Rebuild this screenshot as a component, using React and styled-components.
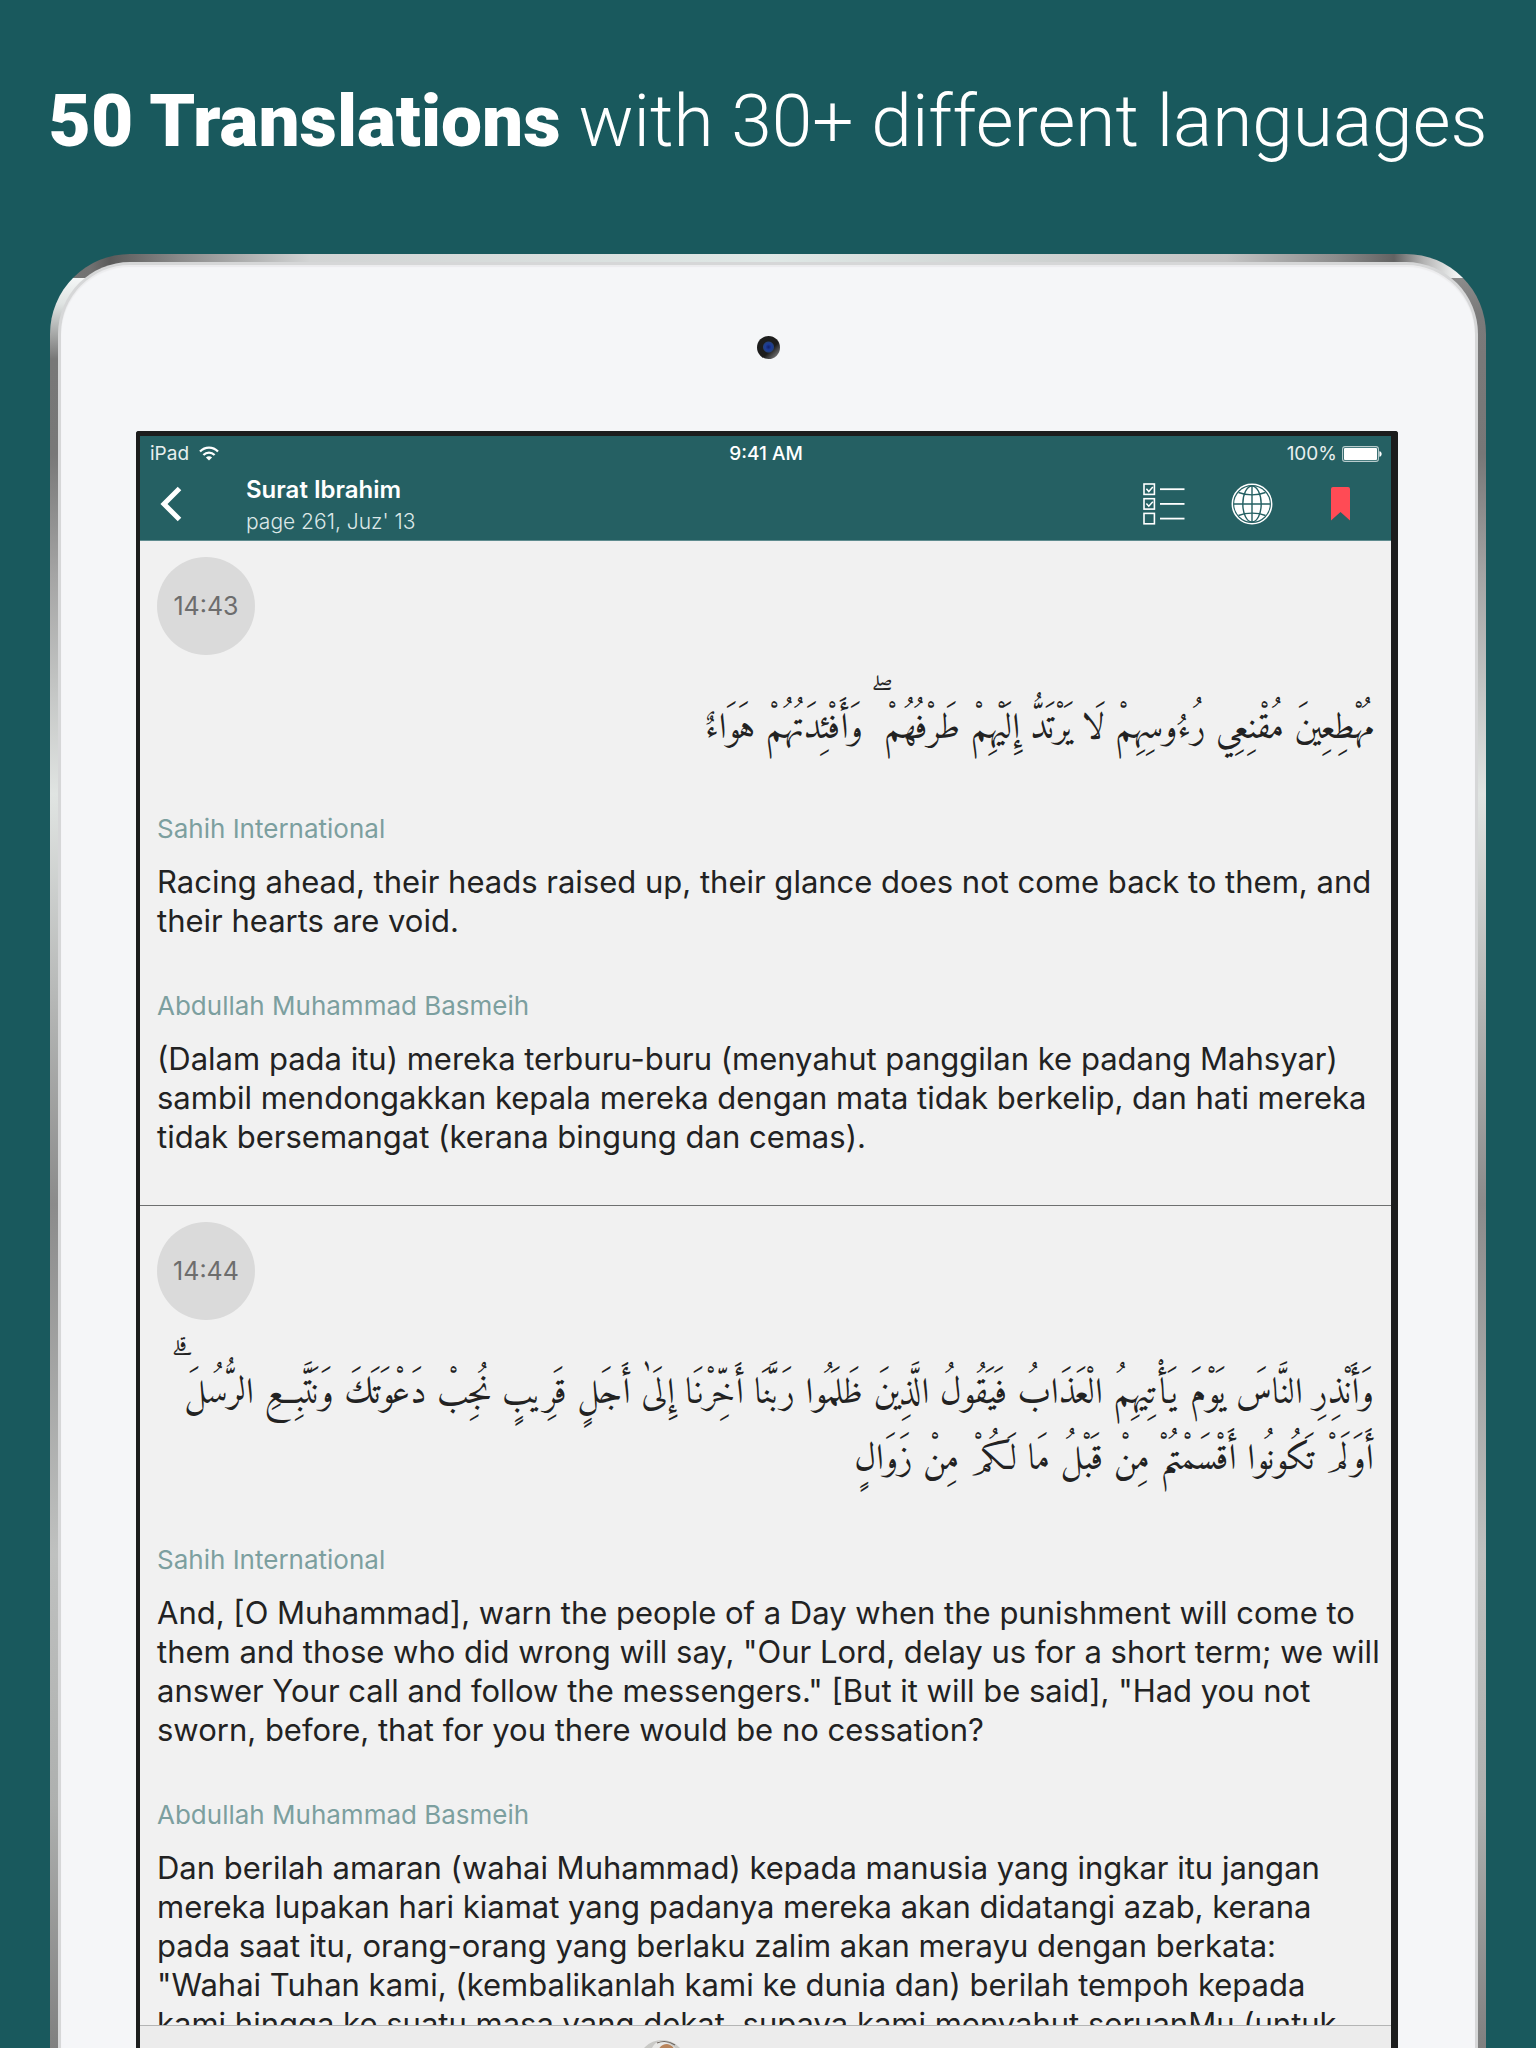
import React from "react";
import styled, { createGlobalStyle } from "styled-components";

const GlobalStyle = createGlobalStyle`
  * { box-sizing: border-box; }
  body {
    margin: 0;
    background: #19595d;
    font-family: Inter, "Open Sans", sans-serif;
  }
`;

const Page = styled.div`
  display: flex;
  flex-direction: column;
  height: 100vh;
  overflow: hidden;
`;

const Headline = styled.h1`
  margin: 0;
  padding: 77px 0 89px;
  color: #fff;
  font-family: Roboto, sans-serif;
  font-size: 73px;
  line-height: 88px;
  font-weight: 300;
  text-align: center;
  white-space: nowrap;

  strong {
    font-weight: 900;
  }
`;

const Device = styled.div`
  flex: 1;
  min-height: 0;
  display: flex;
  margin: 0 50px;
  padding: 8px 8px 0;
  border-radius: 80px 80px 0 0;
  background:
    linear-gradient(90deg, #777 0, #727272 40px, #5a5a5a 60px, #8a8a8a 130px, #d2d4d4 260px, #dfe8e6 50%, #c4c4c4 calc(100% - 260px), #8c8c8c calc(100% - 150px), #626262 calc(100% - 92px), #b4b4b4 calc(100% - 62px), #f2f4f4 calc(100% - 29px)) 0 0 / 100% 24px no-repeat,
    linear-gradient(180deg, #f4f6f6 24px, #dfe3e2 50px, #777 105px, #787878 200px, #a4a4a4 320px, #e0e4e2 540px, #8b8b8b 950px, #bfc1c0 1300px, #aeb0af 1550px, #808080 100%) 0 0 / 50% 100% no-repeat,
    linear-gradient(180deg, #8c8c8c 24px, #7a7a7a 60px, #777 200px, #a4a4a4 320px, #e0e4e2 540px, #8b8b8b 950px, #bfc1c0 1300px, #aeb0af 1550px, #808080 100%) 100% 0 / 50% 100% no-repeat;
`;

const Face = styled.div`
  flex: 1;
  min-width: 0;
  display: flex;
  flex-direction: column;
  border: 3px solid #d6d7d8;
  border-bottom: 0;
  border-radius: 72px 72px 0 0;
  background: #f5f6f8;
  box-shadow: inset 0 2px 1px #ececee;
`;

const CameraRow = styled.div`
  flex: none;
  display: flex;
  justify-content: center;
  padding: 71px 0 72px;
`;

const Camera = styled.div`
  width: 23px;
  height: 23px;
  border-radius: 50%;
  background:
    radial-gradient(circle at 50% 48%, #11206a 0, #1c3c9a 3px, #23407c 5px, transparent 6px),
    linear-gradient(135deg, #1d1d1d 60%, #6a6a6c 85%);
`;

const Screen = styled.main`
  flex: 1;
  min-height: 0;
  display: flex;
  flex-direction: column;
  margin: 0 77px 0 75px;
  border: 5px solid #1c1d1d;
  border-right-width: 7px;
  border-left-width: 4px;
  border-bottom: 0;
  border-radius: 3px 3px 0 0;
  background: #f1f1f1;
`;

const Header = styled.header`
  flex: none;
  border-bottom: 1px solid #5f8c8f;
  background: #256063;
  color: #fff;
`;

const StatusBar = styled.div`
  display: grid;
  grid-template-columns: 1fr auto 1fr;
  align-items: center;
  height: 35px;
  padding: 0 9px 0 10px;
  font-size: 19px;
  line-height: 24px;
`;

const StatusGroup = styled.div`
  display: flex;
  align-items: center;
  gap: ${(p) => (p.$end ? "5px" : "10px")};
  justify-content: ${(p) => (p.$end ? "flex-end" : "flex-start")};
  color: #e8efef;
`;

const Clock = styled.time`
  font-weight: 500;
`;

const NavBar = styled.div`
  display: flex;
  align-items: center;
  height: 69px;
  padding: 0 27px 4px 11px;
`;

const IconButton = styled.button`
  display: grid;
  place-items: center;
  padding: 0;
  border: 0;
  background: none;
  color: inherit;
  width: ${(p) => p.$width || 48}px;
  height: 48px;
  cursor: pointer;

  svg {
    display: block;
  }
`;

const Titles = styled.div`
  flex: 1;
  padding: 5px 0 0 55px;
`;

const Title = styled.h2`
  margin: 0;
  font-size: 24px;
  line-height: 32px;
  font-weight: 600;
`;

const Subtitle = styled.p`
  margin: 0;
  font-size: 21px;
  line-height: 32px;
  font-weight: 300;
  color: #dce8e8;
`;

const Actions = styled.div`
  display: flex;
  align-items: center;
  gap: 40px;
`;

const Verses = styled.div`
  flex: 1;
  min-height: 0;
  overflow: hidden;
`;

const Verse = styled.article`
  padding: 16px 17px 49px;
  border-bottom: 1px solid #6e7070;
  color: #222;
`;

const Badge = styled.div`
  display: grid;
  place-items: center;
  width: 98px;
  height: 98px;
  border-radius: 50%;
  background: #dadada;
  color: #6d6d6d;
  font-size: 25px;
  line-height: 32px;
`;

const Arabic = styled.p`
  margin: 42px 0 0;
  font-family: Amiri, "Noto Naskh Arabic", "DejaVu Sans", sans-serif;
  font-feature-settings: "calt" 0, "liga" 0, "dlig" 0;
  font-size: 36px;
  line-height: 66px;
`;

const Line = styled.span`
  display: block;
  white-space: nowrap;
`;

const Translation = styled.section`
  margin-top: 50px;
`;

const Translator = styled.h3`
  margin: 0 0 17px;
  color: #7c9f9f;
  font-size: 26px;
  line-height: 32px;
  font-weight: 400;
`;

const Body = styled.p`
  margin: 0;
  font-size: 31px;
  line-height: 39px;
`;

const Footer = styled.footer`
  flex: none;
  height: 23px;
  overflow: hidden;
  display: flex;
  justify-content: center;
  padding: 14px 208px 0 0;
  border-top: 1px solid #b4b5b5;
  background: #ececec;
`;

const WifiIcon = () => (
  <svg width="20" height="15" viewBox="0 0 20 15" aria-hidden="true">
    <g fill="none" stroke="#fff" strokeWidth="2.2">
      <path d="M1 5.6C6 .2 14 .2 19 5.6" />
      <path d="M4.4 9.1c3.2-3.4 8-3.4 11.2 0" />
    </g>
    <path fill="#fff" d="M10 14.6 6.9 11.4c1.8-1.7 4.4-1.7 6.2 0z" />
  </svg>
);

const BatteryIcon = () => (
  <svg width="40" height="16" viewBox="0 0 40 16" aria-hidden="true">
    <rect x=".6" y=".6" width="35.8" height="14.8" rx="2.4" fill="none" stroke="#b9cccd" strokeWidth="1.1" />
    <rect x="2" y="2" width="33" height="12" rx="1" fill="#fff" />
    <path d="M37.4 5.2c3 .3 3 5.3 0 5.6z" fill="#fff" />
  </svg>
);

const BackIcon = () => (
  <svg width="22" height="36" viewBox="0 0 22 36" aria-hidden="true">
    <path d="M19.5 2.5 4 18l15.5 15.5" fill="none" stroke="#fff" strokeWidth="5" />
  </svg>
);

const ListIcon = () => (
  <svg width="42" height="42" viewBox="0 0 42 42" fill="none" stroke="#fff" aria-hidden="true">
    {[1, 15.7, 30.4].map((y) => (
      <g key={y}>
        <rect x="1" y={y} width="10.4" height="10.4" strokeWidth="1.6" />
        <path d={`M17 ${y + 5.2}h24.5`} strokeWidth="1.8" />
      </g>
    ))}
    <path d="m3.4 5.8 2.4 2.7 4-4.5M3.4 20.5l2.4 2.7 4-4.5" strokeWidth="1.5" />
  </svg>
);

const GlobeIcon = () => (
  <svg width="42" height="42" viewBox="0 0 42 42" aria-hidden="true">
    <circle cx="21" cy="21" r="19.7" fill="none" stroke="#fff" strokeWidth="1.5" />
    <circle cx="21" cy="21" r="17.8" fill="#fff" />
    <g fill="none" stroke="#256063" strokeWidth="1.4">
      <path d="M21 3v36M3 21h36" />
      <ellipse cx="21" cy="21" rx="9.2" ry="18" />
      <path d="M7.5 9.5c8 3.2 19 3.2 27 0M7.5 32.5c8-3.2 19-3.2 27 0" />
    </g>
  </svg>
);

const BookmarkIcon = () => (
  <svg width="19" height="34" viewBox="0 0 19 34" aria-hidden="true">
    <path d="M2 0h15q2 0 2 2v31.5L9.500 25 0 33.500V2q0-2 2-2z" fill="#ff4b55" />
  </svg>
);

const Avatar = () => (
  <svg width="48" height="48" viewBox="0 0 48 48" role="img" aria-label="Reciter">
    <clipPath id="avatar-clip">
      <circle cx="24" cy="24" r="24" />
    </clipPath>
    <g clipPath="url(#avatar-clip)">
      <rect width="48" height="48" fill="#c9c9c6" />
      <path d="M12 14C14 4 20 0 27 1l12 8v10H12z" fill="#e8e8e6" />
      <path d="M20 12c1-6 5-8 9-8 5 1 8 4 8 9v14H20z" fill="#b9855c" />
      <path d="M19 3C24 1 31 1 37 5" fill="none" stroke="#6b635c" strokeWidth="1.2" />
    </g>
  </svg>
);

const verses = [
  {
    id: "14:43",
    arabic: ["مُهْطِعِينَ مُقْنِعِي رُءُوسِهِمْ لَا يَرْتَدُّ إِلَيْهِمْ طَرْفُهُمْ ۖ وَأَفْئِدَتُهُمْ هَوَاءٌ"],
    translations: [
      {
        by: "Sahih International",
        lang: "en",
        lines: [
          "Racing ahead, their heads raised up, their glance does not come back to them, and",
          "their hearts are void.",
        ],
      },
      {
        by: "Abdullah Muhammad Basmeih",
        lang: "ms",
        lines: [
          "(Dalam pada itu) mereka terburu-buru (menyahut panggilan ke padang Mahsyar)",
          "sambil mendongakkan kepala mereka dengan mata tidak berkelip, dan hati mereka",
          "tidak bersemangat (kerana bingung dan cemas).",
        ],
      },
    ],
  },
  {
    id: "14:44",
    arabic: [
      "وَأَنْذِرِ النَّاسَ يَوْمَ يَأْتِيهِمُ الْعَذَابُ فَيَقُولُ الَّذِينَ ظَلَمُوا رَبَّنَا أَخِّرْنَا إِلَىٰ أَجَلٍ قَرِيبٍ نُجِبْ دَعْوَتَكَ وَنَتَّبِعِ الرُّسُلَ ۗ",
      "أَوَلَمْ تَكُونُوا أَقْسَمْتُمْ مِنْ قَبْلُ مَا لَكُمْ مِنْ زَوَالٍ",
    ],
    translations: [
      {
        by: "Sahih International",
        lang: "en",
        lines: [
          "And, [O Muhammad], warn the people of a Day when the punishment will come to",
          "them and those who did wrong will say, \"Our Lord, delay us for a short term; we will",
          "answer Your call and follow the messengers.\" [But it will be said], \"Had you not",
          "sworn, before, that for you there would be no cessation?",
        ],
      },
      {
        by: "Abdullah Muhammad Basmeih",
        lang: "ms",
        lines: [
          "Dan berilah amaran (wahai Muhammad) kepada manusia yang ingkar itu jangan",
          "mereka lupakan hari kiamat yang padanya mereka akan didatangi azab, kerana",
          "pada saat itu, orang-orang yang berlaku zalim akan merayu dengan berkata:",
          "\"Wahai Tuhan kami, (kembalikanlah kami ke dunia dan) berilah tempoh kepada",
          "kami hingga ke suatu masa yang dekat, supaya kami menyahut seruanMu (untuk",
        ],
      },
    ],
  },
];

const Lines = ({ lines }) => lines.map((line) => <Line key={line}>{line}</Line>);

export default function App() {
  return (
    <>
      <GlobalStyle />
      <Page>
        <Headline>
          <strong>50 Translations</strong> with 30+ different languages
        </Headline>
        <Device>
          <Face>
            <CameraRow>
              <Camera />
            </CameraRow>
            <Screen>
              <Header>
                <StatusBar>
                  <StatusGroup>
                    iPad <WifiIcon />
                  </StatusGroup>
                  <Clock>9:41 AM</Clock>
                  <StatusGroup $end>
                    100% <BatteryIcon />
                  </StatusGroup>
                </StatusBar>
                <NavBar>
                  <IconButton $width={40} aria-label="Back">
                    <BackIcon />
                  </IconButton>
                  <Titles>
                    <Title>Surat Ibrahim</Title>
                    <Subtitle>page 261, Juz' 13</Subtitle>
                  </Titles>
                  <Actions>
                    <IconButton aria-label="Choose translations">
                      <ListIcon />
                    </IconButton>
                    <IconButton aria-label="Languages">
                      <GlobeIcon />
                    </IconButton>
                    <IconButton aria-label="Bookmark">
                      <BookmarkIcon />
                    </IconButton>
                  </Actions>
                </NavBar>
              </Header>
              <Verses>
                {verses.map((verse) => (
                  <Verse key={verse.id}>
                    <Badge>{verse.id}</Badge>
                    <Arabic lang="ar" dir="rtl">
                      <Lines lines={verse.arabic} />
                    </Arabic>
                    {verse.translations.map((t) => (
                      <Translation key={t.by} lang={t.lang}>
                        <Translator>{t.by}</Translator>
                        <Body>
                          <Lines lines={t.lines} />
                        </Body>
                      </Translation>
                    ))}
                  </Verse>
                ))}
              </Verses>
              <Footer>
                <Avatar />
              </Footer>
            </Screen>
          </Face>
        </Device>
      </Page>
    </>
  );
}
